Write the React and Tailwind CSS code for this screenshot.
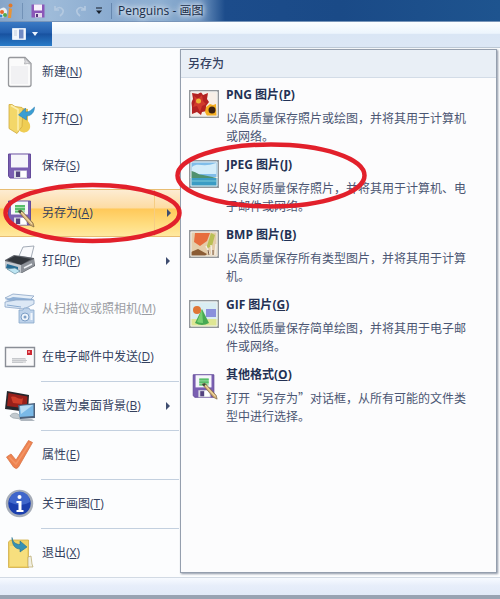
import React from "react";

const NewIcon = () => (
  <svg viewBox="0 0 32 32" className="size-8">
    <path d="M6 1.500h15l6 6v21q0 2-2 2H6.500q-2 0-2-2V3.500q0-2 1.500-2z" fill="#fbfbfb" stroke="#96989c" strokeWidth="1.300" />
    <path d="M20.500 2q1 4 0 6 3-1 6 0z" fill="#dddde0" stroke="#a9abae" strokeWidth=".8" />
    <path d="M7 10h17v18H7z" fill="#f1f1f3" />
  </svg>
);

const OpenIcon = () => (
  <svg viewBox="0 0 32 32" className="size-8">
    <path d="M12 4l12 2v20q-1 4-6 3z" fill="#e5c050" />
    <path d="M17 17c6-2 10 3 9 8-1 4-6 6-10 3z" fill="#efcd53" />
    <path d="M5 1.500h3l3 2 7 1 1 1-1 18-5 7-8-5z" fill="#f3d769" stroke="#cfa93c" strokeWidth=".8" />
    <path d="M7 2.500l7 4v21" fill="none" stroke="#fcefb0" strokeWidth="1.500" />
    <path d="M30.500 4c0 6-4 9-8 9v4l-8-5 7-7v4c4 0 6-2 9-5z" fill="#3a9ed3" stroke="#2678ac" strokeWidth=".5" />
  </svg>
);

const Floppy = () => (
  <>
    <path d="M4.500 4h22v24H6l-1.500-2z" fill="#7a5fb2" stroke="#644b9a" />
    <path d="M7 4.500h17v13H7z" fill="#f6f6fa" />
    <path d="M10 20.500h13V28H10z" fill="#dadce4" />
    <path d="M12 21.500h4V27h-4z" fill="#54437f" />
    <path d="M17 21h5v6h-5z" fill="#fff" />
  </>
);

const SaveIcon = () => (
  <svg viewBox="0 0 32 32" className="size-8"><Floppy /></svg>
);

const SaveAsIcon = () => (
  <svg viewBox="0 0 32 32" className="size-8">
    <Floppy />
    <path d="M11 8h10v7.500H11z" fill="#a4dfac" />
    <path d="M11 8h10v2H11zM11 11h10v2H11zM11 14h8v1.500h-8z" fill="#58bd6b" />
    <path d="M14 14l3-1 12 13 1 4-4-2z" fill="#d9b477" stroke="#76603f" strokeWidth=".7" />
    <path d="M14 14l3-1 1 2-2 1.500z" fill="#3c4b3c" />
    <path d="M17 15l11 12" stroke="#f5dfae" />
  </svg>
);

const PrintIcon = () => (
  <svg viewBox="0 0 32 32" className="size-8">
    <path d="M15 11l4-9 11-1-3 12z" fill="#f9fafc" stroke="#8d97a5" strokeWidth=".8" />
    <path d="M1 15l9-5 20 3 1 8-13 7-17-5z" fill="#5d6168" />
    <path d="M3 15l8-4 16 3-10 6z" fill="#32363c" />
    <path d="M17 20l13-6v7l-13 7z" fill="#8d9299" />
    <path d="M1 16l16 4v8L1 23z" fill="#c4c9cf" />
    <path d="M3 19l11 3v4L2 23z" fill="#276d96" />
    <path d="M3 24l8-1 5 3-5 3z" fill="#bee5f2" stroke="#527c91" strokeWidth=".6" />
    <path d="M20 23l8-4" stroke="#eceff3" strokeWidth="1.500" />
  </svg>
);

const ScanIcon = () => (
  <svg viewBox="0 0 32 32" className="size-8">
    <path d="M1 5l8-4 21 2-7 7z" fill="#e6eff8" stroke="#8aa5c6" strokeWidth=".8" />
    <path d="M1 7l8-3 21 2-8 5z" fill="#8fb0d6" />
    <path d="M1 9l11-2h18v4l-10 5-19-2z" fill="#dce8f5" stroke="#8ba6c8" strokeWidth=".8" />
    <path d="M3 12l14 2" stroke="#8aabd0" />
    <path d="M15 17h4l1-2h5l1 2h4v13H15z" fill="#bdd2ea" stroke="#89a7ca" strokeWidth=".8" />
    <circle cx="21" cy="24" r="4" fill="#eef4fb" stroke="#7d9fc6" />
    <circle cx="21" cy="24" r="1.500" fill="#7d9fc6" />
    <path d="M27.500 20v7" stroke="#f2f7fc" strokeWidth="2" />
  </svg>
);

const MailIcon = () => (
  <svg viewBox="0 0 32 32" className="size-8">
    <path d="M1.500 6.500h29v19h-29z" fill="#fafafb" stroke="#8a8e96" strokeWidth="1.400" />
    <path d="M23 9h5v5h-5z" fill="#ce2934" />
    <path d="M24 10h2v2h-2z" fill="#ed8589" />
    <path d="M8 17h14v5H8z" fill="#dcdddf" />
    <path d="M8 17.500h13M8 19.500h15M8 21.500h11" stroke="#c6c8cc" />
  </svg>
);

const DesktopIcon = () => (
  <svg viewBox="0 0 32 32" className="size-8">
    <path d="M3 1l22 4-1 17L1 19z" fill="#25262c" />
    <path d="M4.500 3l19 3.500-1 12L3 16z" fill="#98201b" />
    <path d="M7 7c5-2 8 4 12 1l-1 6-9-1z" fill="#cf3d29" />
    <path d="M6 26c1-3 7-4 9-1l2 4-8-1z" fill="#c2c9ce" stroke="#8c979d" strokeWidth=".6" />
    <path d="M14 15l17-2v15l-15 1z" fill="#4d6079" />
    <path d="M15.500 16l14-1.500v11.500l-14 1z" fill="#7ab9e7" />
    <path d="M16 16l13-1-12 9z" fill="#b6dcf5" />
    <path d="M15 29h13l3 2H17z" fill="#aeb6be" />
  </svg>
);

const CheckIcon = () => (
  <svg viewBox="0 0 32 32" className="size-8">
    <path d="M2.500 18l4.500-3 5 6L24.500 1.500l4 2L14.500 28q-2 3-5 0z" fill="#ee8350" stroke="#d8764a" strokeWidth=".8" strokeLinejoin="round" />
    <path d="M5 18l7 7L26 4" fill="none" stroke="#f39565" strokeWidth="1.500" />
  </svg>
);

const InfoIcon = () => (
  <svg viewBox="0 0 32 32" className="size-8">
    <circle cx="15.500" cy="15.500" r="12.500" fill="#1b3fae" stroke="#a5acb8" strokeWidth="2.500" />
    <path d="M5 14a10.500 10.500 0 0121 0q-9 6-21 0z" fill="#3f66cb" />
    <circle cx="15.500" cy="9" r="2" fill="#fff" />
    <path d="M12.500 13h5v9h2v2h-7v-2h2v-7h-2z" fill="#fff" />
  </svg>
);

const ExitIcon = () => (
  <svg viewBox="0 0 32 32" className="size-8">
    <path d="M4.500 5l2-2h18v27.500h-20z" fill="#f0d266" stroke="#d0ad47" strokeWidth=".8" />
    <path d="M6 9h17v20H6z" fill="#f7df7e" />
    <path d="M24 20l3-1 1 8 1 3h-5z" fill="#f1efe2" stroke="#b7a767" strokeWidth=".7" />
    <path d="M8 .5c1 5 4 7 8 7V4l7 6-7 5v-3C11 12 8 8 8 .5z" fill="#3792b5" stroke="#21718f" strokeWidth=".6" />
  </svg>
);

const Frame = ({ children }) => (
  <svg viewBox="0 0 30 28" className="h-7 w-[30px]">
    {children}
    <path d="M.75.75h28.500v26.500H.75z" fill="none" stroke="#93979b" strokeWidth="1.500" />
    <path d="M2 2h26v24H2z" fill="none" stroke="#eef0ee" />
  </svg>
);

const PngIcon = () => (
  <Frame>
    <path d="M0 0h30v28H0z" fill="#f8efe7" />
    <path d="M3 3l6 1 3-2 2 3 5-2-1 6 2 3-3 4 1 5-5 1-1 3-4-3-5 2v-7l-1-4 2-4z" fill="#b32222" />
    <path d="M5 6l4 3 4-4 1 6 3 3-4 2-2 6-3-6-4 1 2-5z" fill="#d13a2c" />
    <circle cx="9.500" cy="11" r="2.500" fill="#edb536" />
    <path d="M17 17l4-3 3 1 3-1 1 12H18l-2-4z" fill="#f4ae21" />
    <circle cx="23" cy="20" r="3.500" fill="#3c2110" />
  </Frame>
);

const JpegIcon = () => (
  <Frame>
    <path d="M0 0h30v17H0z" fill="#7fbdea" />
    <path d="M3 7c6-5 11 1 24-4v11H3z" fill="#d4edfa" />
    <path d="M2 11c4 0 7 4 12 4l14 3v1H2z" fill="#4f9170" />
    <path d="M0 18h30v10H0z" fill="#3b9cc4" />
    <path d="M3 20h24v2H3z" fill="#5cb4cf" />
  </Frame>
);

const BmpIcon = () => (
  <Frame>
    <path d="M0 0h30v28H0z" fill="#e5cdaa" />
    <path d="M6 3h15l-3 8-7 5-6-4z" fill="#e76d3d" />
    <path d="M22 3l4 2-3 11-6 3z" fill="#b9bf55" />
    <path d="M2 22l7-3 9 5-2 2H2z" fill="#8b5c35" />
    <path d="M17 16l4 9M22 15l1 10M27 14l-1 11" stroke="#f4eee3" strokeWidth="1.500" />
    <path d="M19 20l1 5M24 20v5" stroke="#795943" />
  </Frame>
);

const GifIcon = () => (
  <Frame>
    <path d="M0 0h30v28H0z" fill="#d9edf3" />
    <path d="M0 19h30v9H0z" fill="#dee693" />
    <path d="M17 9h10v8H17z" fill="#8a90dc" />
    <path d="M13 9l7 14q-7 4-14 0z" fill="#47a952" />
    <path d="M13 9l1 14q-4 0-6-1z" fill="#76cf70" />
    <circle cx="8" cy="10" r="4" fill="#df7535" />
  </Frame>
);

const MENU = [
  { icon: NewIcon, text: "新建", k: "N", short: true },
  { icon: OpenIcon, text: "打开", k: "O", short: true },
  { icon: SaveIcon, text: "保存", k: "S", short: true },
  { icon: SaveAsIcon, text: "另存为", k: "A", arrow: true, active: true },
  { icon: PrintIcon, text: "打印", k: "P", arrow: true },
  { icon: ScanIcon, text: "从扫描仪或照相机", k: "M", disabled: true },
  { icon: MailIcon, text: "在电子邮件中发送", k: "D" },
  { icon: DesktopIcon, text: "设置为桌面背景", k: "B", arrow: true, sep: true },
  { icon: CheckIcon, text: "属性", k: "E", sep: true },
  { icon: InfoIcon, text: "关于画图", k: "T", sep: true },
  { icon: ExitIcon, text: "退出", k: "X", sep: true },
];

const FORMATS = [
  { icon: PngIcon, text: "PNG 图片", k: "P", desc: "以高质量保存照片或绘图，并将其用于计算机或网络。" },
  { icon: JpegIcon, text: "JPEG 图片", k: "J", desc: "以良好质量保存照片，并将其用于计算机、电子邮件或网络。", circled: true },
  { icon: BmpIcon, text: "BMP 图片", k: "B", desc: "以高质量保存所有类型图片，并将其用于计算机。" },
  { icon: GifIcon, text: "GIF 图片", k: "G", desc: "以较低质量保存简单绘图，并将其用于电子邮件或网络。" },
  { icon: SaveAsIcon, text: "其他格式", k: "O", desc: "打开“另存为”对话框，从所有可能的文件类型中进行选择。" },
];

function Label({ text, k }) {
  return (
    <span>
      {text}(<span className="underline">{k}</span>)
    </span>
  );
}

function MenuItem({ item }) {
  const Icon = item.icon;
  return (
    <li className="relative">
      {item.sep && <hr className="mr-px ml-[41px] border-[#c3d0df]" />}
      <button
        disabled={item.disabled}
        className={
          "flex w-full items-center gap-1.5 pl-1 text-left " +
          (item.short ? "h-[47px] " : "h-12 ") +
          (item.active
            ? "border-y border-[#e8bd73] bg-[linear-gradient(#fdecd2_0%,#fddca4_38%,#ffc95a_42%,#ffdd80_75%,#ffe9a0_100%)] "
            : "") +
          (item.disabled ? "text-[#9b9ea4]" : "text-[#34415f]")
        }
      >
        <Icon />
        <span className="flex-1 whitespace-nowrap"><Label text={item.text} k={item.k} /></span>
        {item.arrow && (
          <span className={"flex w-[26px] items-center self-stretch pl-3 " + (item.active ? "border-l border-[#f6cd83]" : "")}>
            <svg viewBox="0 0 4 8" className="h-2 w-1"><path d="M0 0l4 4-4 4z" fill="#3e4d70" /></svg>
          </span>
        )}
      </button>
      {item.active && (
        <svg viewBox="0 0 180 62" className="pointer-events-none absolute top-[-7px] left-[3px] z-20 h-[62px] w-[180px]">
          <ellipse cx="89.500" cy="31" rx="87" ry="28" fill="none" stroke="#e2202b" strokeWidth="4.500" />
        </svg>
      )}
    </li>
  );
}

function FormatItem({ item }) {
  const Icon = item.icon;
  return (
    <li className="relative">
      <button className="flex w-full items-start gap-[7px] text-left">
        <span className="flex w-[30px] shrink-0 justify-center pt-1"><Icon /></span>
        <span className="flex max-w-[244px] flex-col gap-[5px] leading-[18px]">
          <strong className="font-bold text-[#233154]"><Label text={item.text} k={item.k} /></strong>
          <span className="font-['Noto_Sans_CJK_SC',sans-serif] text-[#4b5673]">{item.desc}</span>
        </span>
      </button>
      {item.circled && (
        <svg viewBox="0 0 192 67" className="pointer-events-none absolute top-[-14px] left-[-14px] z-20 h-[67px] w-48">
          <ellipse cx="96" cy="33.500" rx="93.500" ry="31" fill="none" stroke="#e2202b" strokeWidth="4.500" />
        </svg>
      )}
    </li>
  );
}

export default function App() {
  return (
    <div lang="zh-CN" className="overflow-hidden bg-[#98a3b2] pb-1 font-['Open_Sans','Noto_Sans_CJK_SC',sans-serif] text-xs">
      <header className="flex h-[22px] items-center border-b border-[#7895b9] bg-[linear-gradient(90deg,#86a5c9_0px,#9ebbd9_50px,#8aabd0_110px,#8fb0d2_160px,#6f95c1_200px,#1c4c8b_225px,#1a4a87_340px,#1e548f_100%)]">
        <svg viewBox="0 0 14 18" className="h-[18px] w-3.5">
          <path d="M0 7q5-4 7 2 1 7-7 7z" fill="#e9edf0" />
          <circle cx="2" cy="10" r="2" fill="#e5662c" />
          <circle cx="5" cy="13" r="2" fill="#54a94b" />
          <circle cx="1" cy="14" r="1.500" fill="#3189cc" />
          <path d="M9 6l3 1-1 9-3 0z" fill="#e99435" />
          <circle cx="10.500" cy="3.500" r="2" fill="#e07a2c" />
        </svg>
        <span className="ml-2 h-4 w-px bg-[#7292b7]" />
        <button aria-label="保存" className="ml-2">
          <svg viewBox="0 0 14 16" className="h-4 w-3.5">
            <path d="M.5 1.500h13v13h-13z" fill="#8b57b8" />
            <path d="M3 1.500h8v6H3z" fill="#f6f0fa" />
            <path d="M4 10h7v4.500H4z" fill="#e2d8eb" />
            <path d="M5 11h2v3H5z" fill="#56347d" />
          </svg>
        </button>
        <button aria-label="撤消" className="ml-2">
          <svg viewBox="0 0 12 14" className="h-3.5 w-3"><path d="M2 2v4h4M2 6q5-5 8 0 1 3-3 6" fill="none" stroke="#b4c9e0" strokeWidth="1.700" /></svg>
        </button>
        <button aria-label="重做" className="ml-2.5">
          <svg viewBox="0 0 12 14" className="h-3.5 w-3"><path d="M10 2v4H6M10 6q-5-5-8 0-1 3 3 6" fill="none" stroke="#b4c9e0" strokeWidth="1.700" /></svg>
        </button>
        <button aria-label="自定义" className="ml-2">
          <svg viewBox="0 0 8 8" className="size-2"><path d="M1 1h6" stroke="#273140" strokeWidth="1.200" /><path d="M1 3.500h6L4 7z" fill="#18202c" /></svg>
        </button>
        <span className="ml-2 h-4 w-px bg-[#6687af]" />
        <h1 className="ml-1.5 text-[#192d49] [text-shadow:0_0_5px_#ffffff,0_0_8px_#ffffff]">Penguins - 画图</h1>
      </header>

      <div className="flex h-[26px] items-start border-b border-[#bcc8d5] bg-[linear-gradient(#fcfeff_0%,#edf5fd_45%,#dae6f5_50%,#dce7f5_100%)]">
        <button aria-label="画图" className="flex h-6 w-[52px] items-center gap-1.5 bg-[linear-gradient(#3a7ac4_0%,#235fae_45%,#1852a0_50%,#2a7cc8_100%)] pl-3">
          <svg viewBox="0 0 14 12" className="h-3 w-3.5">
            <path d="M.5.5h13v11H.5z" fill="#f3f7fc" stroke="#dbe7f5" />
            <path d="M7 1.500h4.500v9H7z" fill="#718bc4" />
            <path d="M2 3h3M2 5h3M2 7h3" stroke="#c4cfdf" />
          </svg>
          <svg viewBox="0 0 6 4" className="h-1 w-1.5"><path d="M0 0h6L3 4z" fill="#ecf5ff" /></svg>
        </button>
      </div>

      <main className="flex bg-[#fcfdfe]">
        <nav className="w-[180px] shrink-0">
          <ul>{MENU.map((m) => <MenuItem key={m.k} item={m} />)}</ul>
        </nav>
        <section className="mt-px mr-[3px] mb-1 flex-1 border border-[#959fae] bg-[#fcfcfd] shadow-[1px_1px_2px_#8c95a4]">
          <h2 className="flex h-7 items-center border-b border-[#d3dce7] bg-[#e9eff6] pl-[7px] font-medium text-[#34415f]">另存为</h2>
          <ul className="flex flex-col gap-[11px] pt-2 pl-2">
            {FORMATS.map((f) => <FormatItem key={f.k} item={f} />)}
          </ul>
        </section>
      </main>

      <footer className="h-[18px] border-t border-[#d2dae4] bg-[linear-gradient(#f7faff_0%,#e7eefa_45%,#e1eaf7_100%)]" />
    </div>
  );
}
